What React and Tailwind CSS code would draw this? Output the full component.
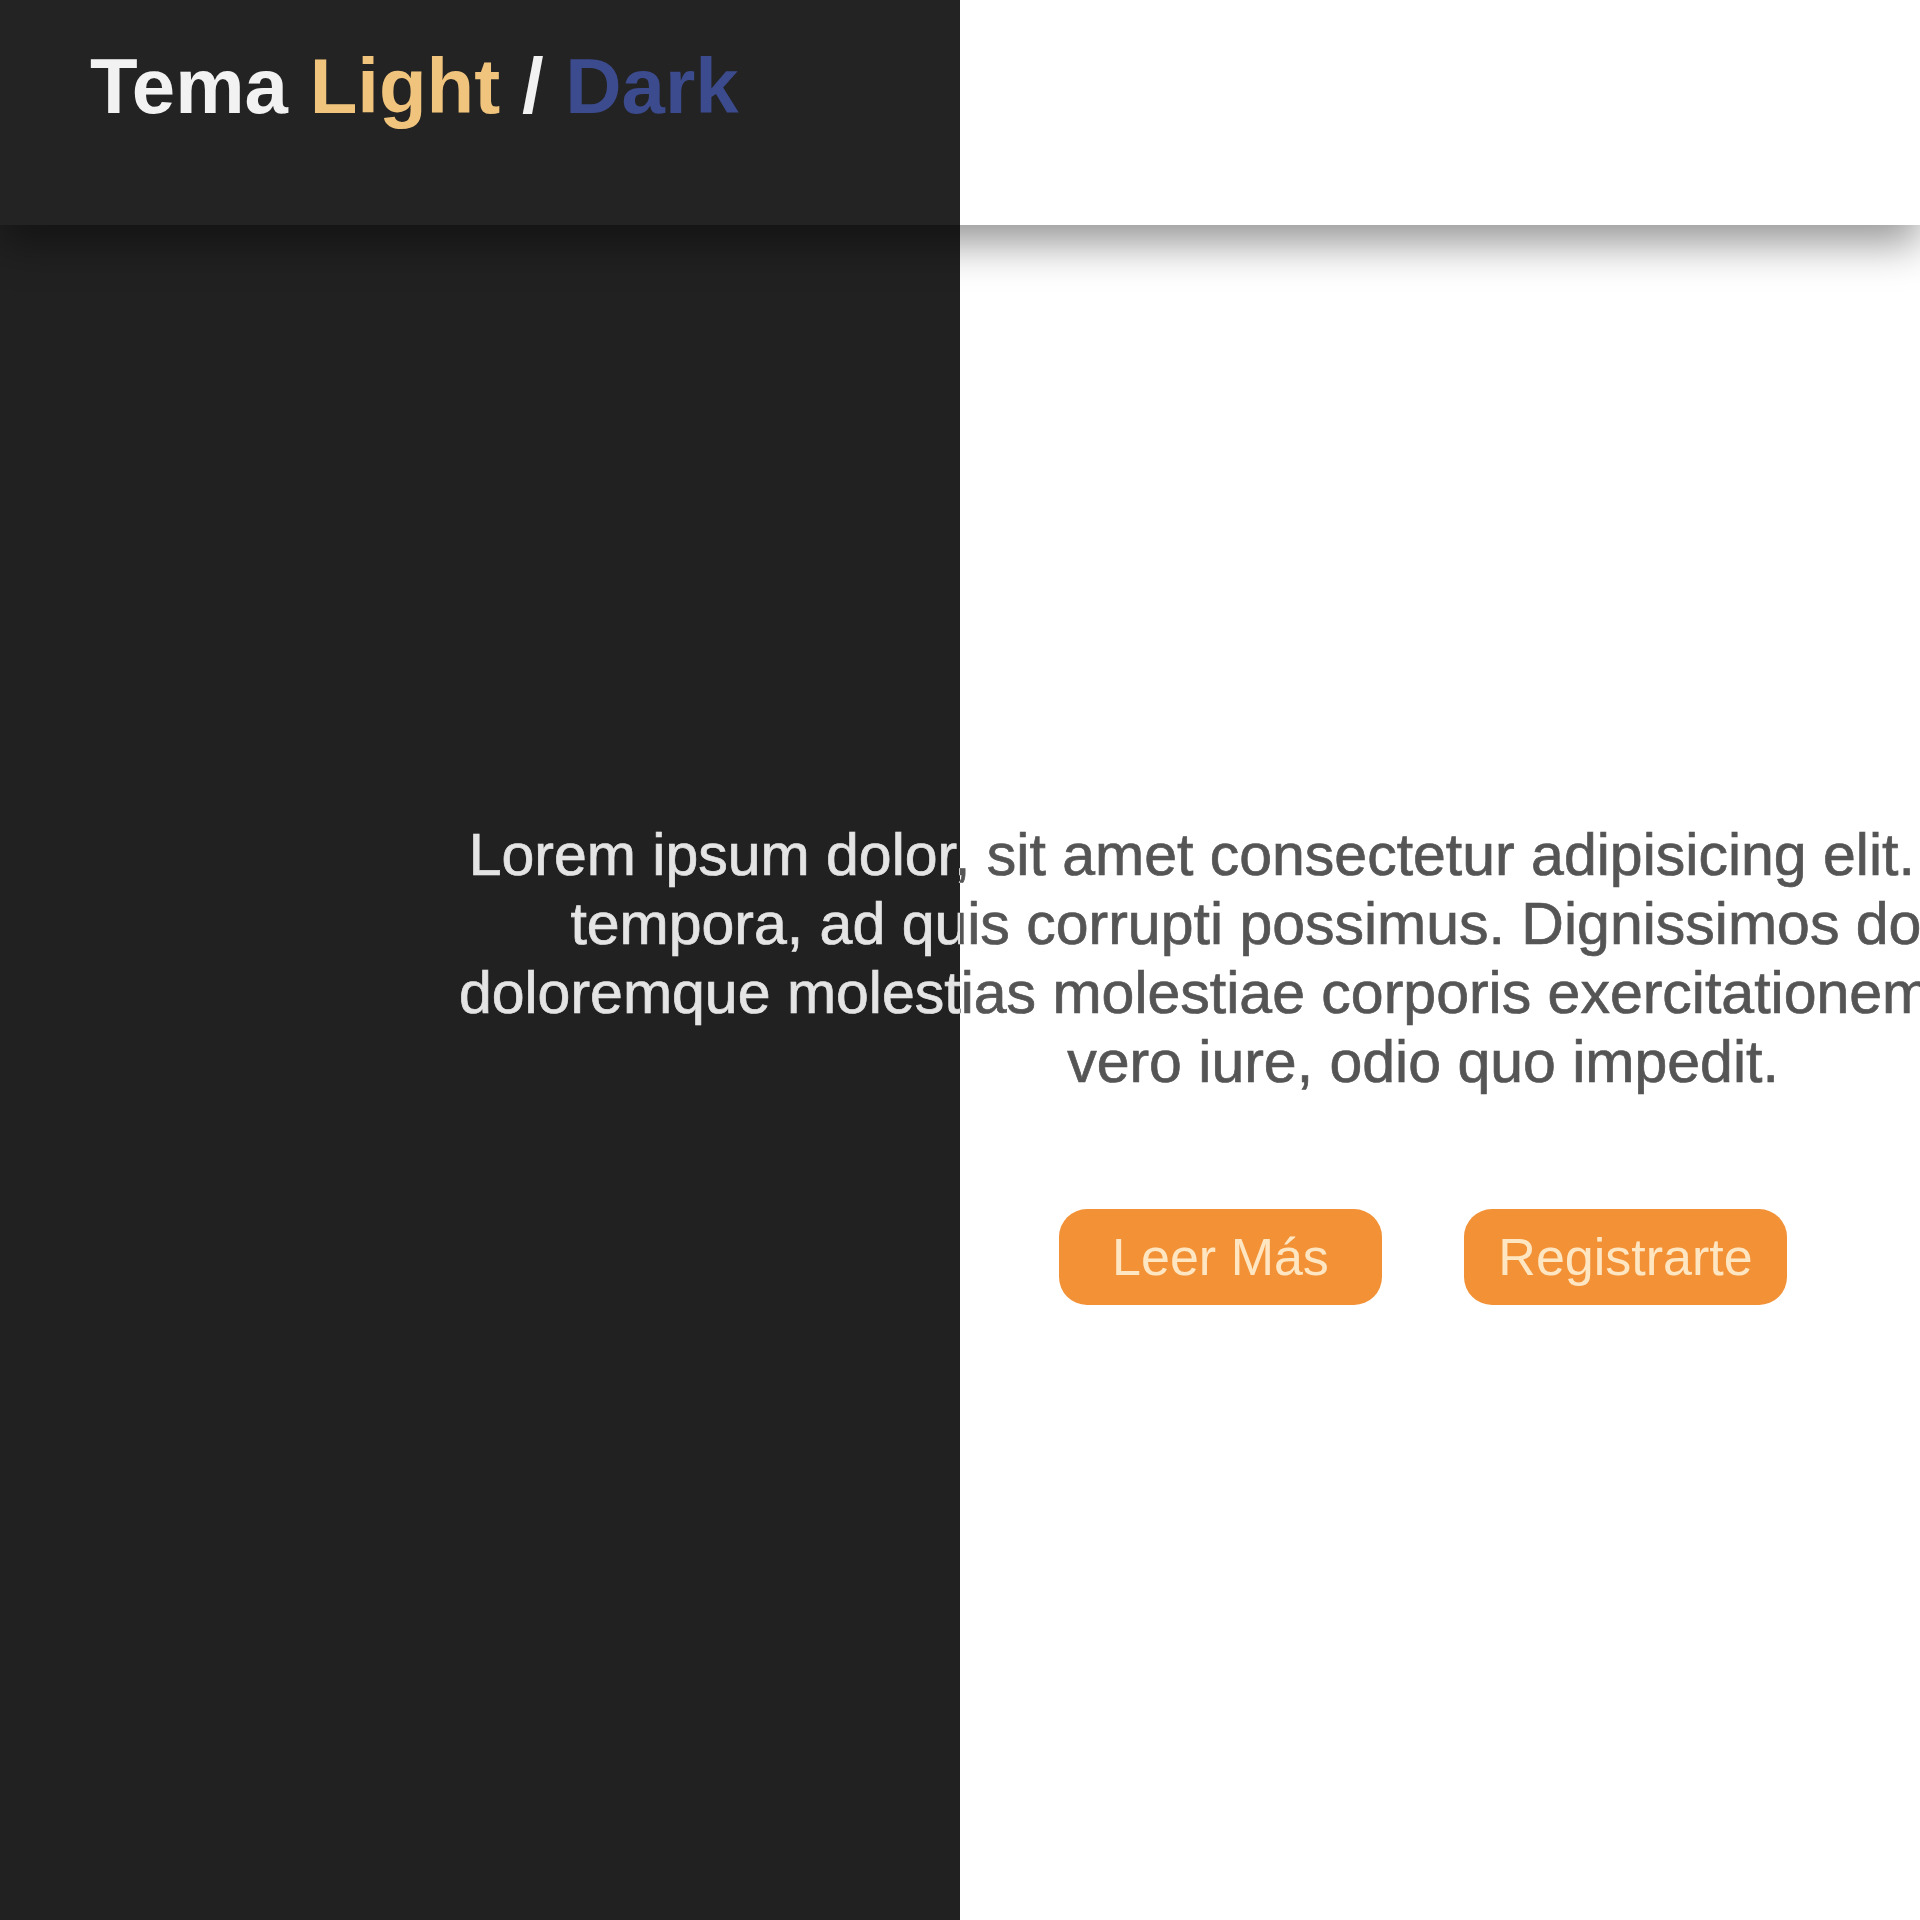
// Página con tema claro / oscuro partido a la mitad
const lineas = [
  'Lorem ipsum dolor, sit amet consectetur adipisicing elit. Voluptatibus ipsa',
  'tempora, ad quis corrupti possimus. Dignissimos dolores, quidem',
  'doloremque molestias molestiae corporis exercitationem nostrum quidem,',
  'vero iure, odio quo impedit.',
];

function Pagina({ dark }) {
  return (
    <div
      className={`[grid-area:1/1] flex flex-col h-[1920px] overflow-hidden ${
        dark ? 'bg-[#212121] [clip-path:inset(0_50%_0_0)]' : 'bg-white'
      }`}
    >
      {/* Header */}
      <header
        className={`h-[225px] shrink-0 pl-[90px] pt-[47px] shadow-[0_18px_40px_rgba(0,0,0,0.42)] ${
          dark ? 'bg-[#232323]' : 'bg-white'
        }`}
      >
        <h1 className="text-[78px] leading-none font-bold font-['Liberation_Sans',Arial,sans-serif] whitespace-nowrap">
          <span className="text-[#f2f2f2]">Tema </span>
          <span className="text-[#f0c47c]">Light</span>
          <span className="text-[#f2f2f2]"> / </span>
          <span className="text-[#3c4a8e]">Dark</span>
        </h1>
      </header>

      {/* Contenido */}
      <main className="w-[2846px] pt-[596px] flex flex-col items-center font-['Liberation_Sans',Arial,sans-serif]">
        <p
          className={`text-[59px] leading-[69px] text-center whitespace-nowrap [-webkit-text-stroke:0.7px_currentColor] ${
            dark ? 'text-[#e4e4e4]' : 'text-[#555555]'
          }`}
        >
          {lineas.map((l) => (
            <span key={l} className="block">
              {l}
            </span>
          ))}
        </p>

        <div className="mt-[112px] flex gap-[82px]">
          <button className="w-[323px] h-[96px] rounded-[28px] bg-[#f29136] text-[#ffe6c2] text-[52px]">
            Leer Más
          </button>
          <button className="w-[323px] h-[96px] rounded-[28px] bg-[#f29136] text-[#ffe6c2] text-[52px]">
            Registrarte
          </button>
        </div>
      </main>
    </div>
  );
}

function App() {
  return (
    <div className="w-full h-[1920px] overflow-hidden grid grid-cols-[minmax(0,1fr)]">
      <Pagina dark={false} />
      <Pagina dark />
    </div>
  );
}

export default App;
